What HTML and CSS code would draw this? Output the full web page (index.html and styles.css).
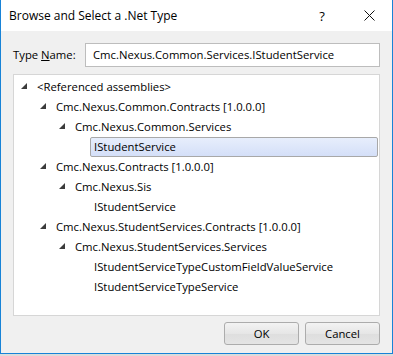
FILE: index.html
```html
<!DOCTYPE html>
<html lang="en">
<head>
  <meta charset="UTF-8">
  <title>Browse and Select a .Net Type</title>
  <link rel="stylesheet" href="styles.css">
</head>
<body>
  <div class="ventana">
    <div class="titulo">
      <span class="titulo-texto">Browse and Select a .Net Type</span>
      <span class="boton-titulo">?</span>
      <span class="boton-titulo cerrar">
        <svg width="11" height="11" viewBox="0 0 11 11">
          <path d="M0.5 0.5 L10.5 10.5 M10.5 0.5 L0.5 10.5" stroke="#111" stroke-width="1" fill="none"/>
        </svg>
      </span>
    </div>

    <div class="contenido">
      <div class="fila-tipo">
        <label class="etiqueta">Type <u>N</u>ame:</label>
        <div class="entrada">Cmc.Nexus.Common.Services.IStudentService</div>
      </div>

      <div class="arbol">
        <div class="nodo nivel0"><span class="flecha"></span><span class="cabecera">&lt;Referenced assemblies&gt;</span></div>
        <div class="nodo nivel1"><span class="flecha"></span><span class="cabecera">Cmc.Nexus.Common.Contracts [1.0.0.0]</span></div>
        <div class="nodo nivel2"><span class="flecha"></span><span class="cabecera">Cmc.Nexus.Common.Services</span></div>
        <div class="nodo nivel3"><span class="hueco"></span><span class="cabecera elegido">IStudentService</span></div>
        <div class="nodo nivel1"><span class="flecha"></span><span class="cabecera">Cmc.Nexus.Contracts [1.0.0.0]</span></div>
        <div class="nodo nivel2"><span class="flecha"></span><span class="cabecera">Cmc.Nexus.Sis</span></div>
        <div class="nodo nivel3"><span class="hueco"></span><span class="cabecera">IStudentService</span></div>
        <div class="nodo nivel1"><span class="flecha"></span><span class="cabecera">Cmc.Nexus.StudentServices.Contracts [1.0.0.0]</span></div>
        <div class="nodo nivel2"><span class="flecha"></span><span class="cabecera">Cmc.Nexus.StudentServices.Services</span></div>
        <div class="nodo nivel3"><span class="hueco"></span><span class="cabecera">IStudentServiceTypeCustomFieldValueService</span></div>
        <div class="nodo nivel3"><span class="hueco"></span><span class="cabecera">IStudentServiceTypeService</span></div>
      </div>

      <div class="botones">
        <button class="boton">OK</button>
        <button class="boton">Cancel</button>
      </div>
    </div>
  </div>
</body>
</html>
```

FILE: styles.css
```css
html {
  background: #dcdcdc;
}

body {
  margin: 0;
  font-family: 'Segoe UI', 'Open Sans', sans-serif;
  font-size: 11.3px;
  color: #000;
}

.ventana {
  width: 391px;
  height: 353px;
  border: 1px solid #1883d7;
  border-top: none;
  background: #f0f0f0;
  display: flex;
  flex-direction: column;
}

.titulo {
  height: 31px;
  background: #fff;
  display: flex;
  align-items: center;
  font-size: 12px;
}

.titulo-texto {
  flex: 1;
  padding-left: 8px;
  padding-bottom: 1px;
}

.boton-titulo {
  width: 46px;
  height: 31px;
  display: flex;
  align-items: center;
  justify-content: center;
  font-size: 13px;
}

.cerrar {
  padding-left: 1px;
}

.contenido {
  flex: 1;
  padding: 12px 12px 10px 12px;
  display: flex;
  flex-direction: column;
}

.fila-tipo {
  display: flex;
  align-items: center;
  height: 24px;
}

.etiqueta {
  width: 72px;
  padding-bottom: 1px;
}

.entrada {
  flex: 1;
  height: 22px;
  line-height: 21px;
  border: 1px solid #bdbdbd;
  background: #fff;
  padding-left: 7px;
}

.arbol {
  margin-top: 7px;
  height: 238px;
  border: 1px solid #d6d6d6;
  background: #fff;
  padding-top: 2px;
}

.nodo {
  display: flex;
  align-items: center;
  height: 20px;
}

.nivel1 { padding-left: 19px; }
.nivel2 { padding-left: 38px; }
.nivel3 { padding-left: 57px; }

.flecha,
.hueco {
  width: 19px;
  height: 20px;
  position: relative;
  flex-shrink: 0;
}

/* flecha de nodo expandido */
.flecha::after {
  content: "";
  position: absolute;
  left: 7px;
  top: 6px;
  width: 0;
  height: 0;
  border-style: solid;
  border-width: 0 0 6px 6px;
  border-color: transparent transparent #3c3c3c transparent;
}

.cabecera {
  padding: 0 3px;
  border: 1px solid transparent;
  height: 18px;
  line-height: 17px;
  white-space: nowrap;
}

.elegido {
  flex: 1;
  margin-right: 1px;
  border-color: #a8a8a8;
  border-radius: 2px;
  background: linear-gradient(#e7eefc, #d4dff8);
}

.botones {
  margin-top: 6px;
  display: flex;
  justify-content: flex-end;
  gap: 6px;
}

.boton {
  width: 75px;
  height: 23px;
  font-family: 'Segoe UI', 'Open Sans', sans-serif;
  font-size: 11.3px;
  color: #000;
  border: 1px solid #acacac;
  border-radius: 3px;
  background: linear-gradient(#f3f3f3, #e6e6e6 50%, #dedede 50%, #e4e4e4);
  padding: 0;
}
```
